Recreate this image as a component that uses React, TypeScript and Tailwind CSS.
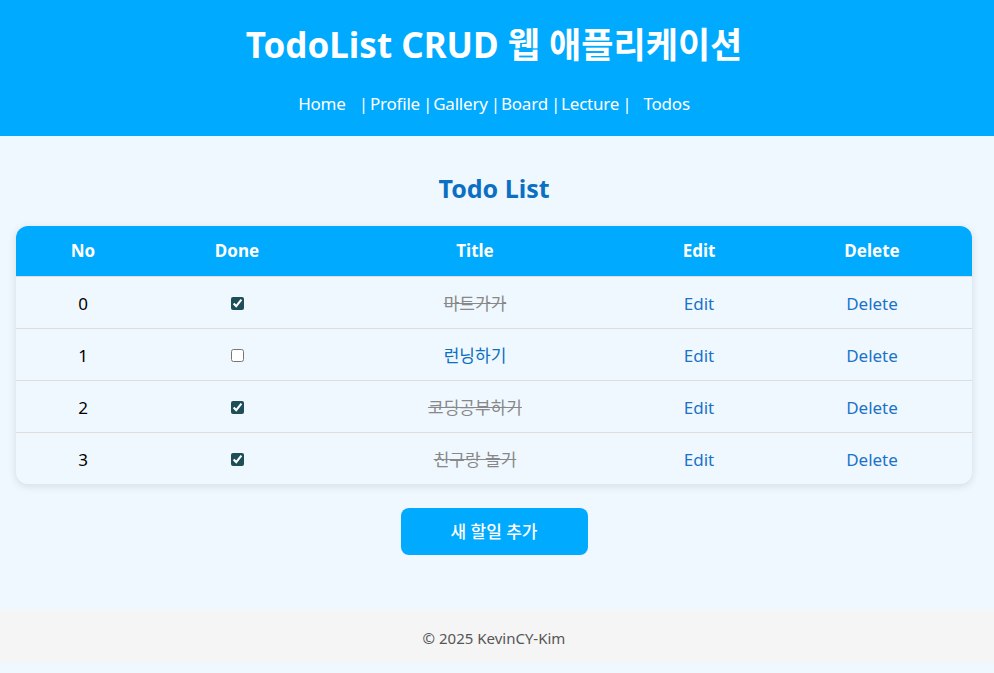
import React from 'react';

const todos = [
  { id: 0, done: true, title: '마트가가' },
  { id: 1, done: false, title: '런닝하기' },
  { id: 2, done: true, title: '코딩공부하기' },
  { id: 3, done: true, title: '친구랑 놀기' },
];

const links = ['Profile', 'Gallery', 'Board', 'Lecture'];

function App() {
  return (
    <div className="min-h-[673px] bg-[#f0f8ff] text-black" style={{ fontFamily: '"Noto Sans", "Noto Sans CJK KR", sans-serif' }}>
      <header className="h-[136px] bg-[#00aaff] text-white text-center pt-[22px] pr-[6px]">
        <h1 className="text-[35px] font-bold leading-[46px]">TodoList CRUD 웹 애플리케이션</h1>
        <nav className="mt-[24px] text-[17px] leading-[24px] flex justify-center tracking-[-0.2px]">
          <span>Home</span>
          <span className="ml-[13px] mr-[2px]">|</span>
          {links.map((l) => (
            <React.Fragment key={l}>
              <span>{l}</span>
              <span className="ml-[3px] mr-[1px]">|</span>
            </React.Fragment>
          ))}
          <span className="ml-[11px]">Todos</span>
        </nav>
      </header>

      <main className="pl-4 pr-[22px] pt-[36px] pb-[55px]">
        <h2 className="text-center text-[25px] font-bold text-[#0b6fc2] leading-[32px]">Todo List</h2>
        <div className="mt-[22px] rounded-xl overflow-hidden shadow-[0_2px_8px_rgba(0,0,0,0.12)] bg-[#f0f8ff]">
          <table className="w-full border-collapse text-center text-[17px]">
            <thead>
              <tr className="bg-[#00aaff] text-white h-[50px]">
                <th className="w-[134px] font-bold">No</th>
                <th className="w-[174px] font-bold">Done</th>
                <th className="w-[302px] font-bold">Title</th>
                <th className="w-[146px] font-bold">Edit</th>
                <th className="font-bold">Delete</th>
              </tr>
            </thead>
            <tbody>
              {todos.map((t) => (
                <tr key={t.id} className="h-[52px] border-t border-[#dddddd]">
                  <td className="pt-[3px]">{t.id}</td>
                  <td>
                    <input type="checkbox" defaultChecked={t.done} className="accent-[#1e4f59] align-middle" />
                  </td>
                  <td className={t.done ? 'pt-[3px] line-through text-[#888888]' : 'pt-[3px] text-[#0b6fc2]'}>{t.title}</td>
                  <td className="pt-[3px] text-[#1a73c8]">Edit</td>
                  <td className="pt-[3px] text-[#1a73c8]">Delete</td>
                </tr>
              ))}
            </tbody>
          </table>
        </div>
        <div className="flex justify-center mt-[24px]">
          <button className="w-[187px] h-[47px] rounded-lg bg-[#00aaff] text-white text-[17px] font-medium pt-[1px]">새 할일 추가</button>
        </div>
      </main>

      <footer className="h-[53px] bg-[#f5f5f5] flex items-center justify-center pr-[6px] pt-[3px] text-[15px] text-[#555555]">
        © 2025 KevinCY-Kim
      </footer>
    </div>
  );
}

export default App;
